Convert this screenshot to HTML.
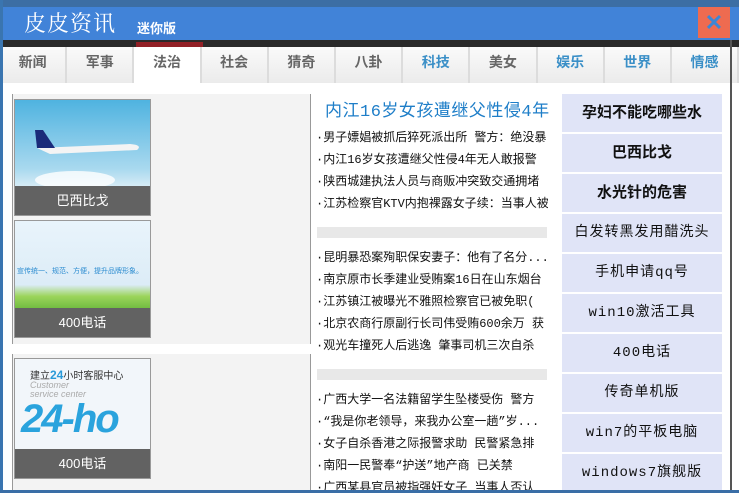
<!DOCTYPE html>
<html><head><meta charset="utf-8"><style>
*{margin:0;padding:0;box-sizing:border-box}
body{width:739px;height:493px;overflow:hidden;background:#fff;font-family:"Liberation Sans","Noto Sans CJK SC",sans-serif;position:relative}
.abs{position:absolute}
#top{left:0;top:0;width:739px;height:7px;background:#3c6ea4}
#hd{left:0;top:7px;width:739px;height:33px;background:#4183d8}
#logo{left:24px;top:7px;color:#fff;font-size:22px;font-family:"Noto Serif CJK SC",serif;letter-spacing:1px}
#mini{left:137px;top:18px;color:#fff;font-size:13px;font-weight:bold}
#close{left:698px;top:7px;width:32px;height:31px;background:#ee6b50;color:#3d86d4;font-size:22px;font-weight:bold;text-align:center;line-height:31px}
#bar{left:0;top:40px;width:739px;height:7px;background:#2a2a2a}
#red{left:136px;top:42px;width:67px;height:5px;background:#922026}
#tabs{left:0;top:47px;width:739px;height:36px;display:flex}
.t{width:67.2px;height:36px;background:linear-gradient(#fafafa,#ebebeb);border-right:2px solid #dcdcdc;text-align:center;line-height:31px;font-size:14px;font-weight:bold;color:#666}
.t.b{color:#3a8fc7}.t.a{background:#fff}
#lb{left:0;top:0;width:3px;height:493px;background:#3a75b0}
#rb{left:730px;top:40px;width:2px;height:453px;background:#555}
#bb{left:0;top:490px;width:739px;height:3px;background:#3a6ea6}
.lp{left:12px;width:299px;background:#f3f3f3;border-left:1px solid #999;border-right:1px solid #999}
.img{left:14px;width:137px;border:1px solid #999;overflow:hidden}
.cap{position:absolute;left:0;bottom:0;width:100%;height:29px;background:#626262;color:#fff;font-size:13px;text-align:center;line-height:29px}
.mid{left:316px;font-size:12px;color:#111;line-height:22px;font-family:"Liberation Mono","Noto Sans CJK SC",monospace;white-space:nowrap;width:232px;overflow:hidden}
.gb{left:317px;width:230px;height:11px;background:#e8e8e8}
.rb{left:562px;width:160px;height:38px;background:#e0e4f7;text-align:center;line-height:38px;font-size:14px;color:#111;font-family:"Liberation Mono","Noto Sans CJK SC",monospace;white-space:nowrap;overflow:hidden;letter-spacing:1px}
.rb.bo{font-weight:bold;font-family:"Liberation Sans","Noto Sans CJK SC",sans-serif;font-size:15px;letter-spacing:0}
</style></head><body>
<div class="abs" id="top"></div>
<div class="abs" id="hd"></div>
<div class="abs" id="logo">皮皮资讯</div>
<div class="abs" id="mini">迷你版</div>
<div class="abs" id="close">✕</div>
<div class="abs" id="bar"></div>
<div class="abs" id="red"></div>
<div class="abs" id="tabs">
<div class="t">新闻</div><div class="t">军事</div><div class="t a">法治</div><div class="t">社会</div><div class="t">猜奇</div><div class="t">八卦</div><div class="t b">科技</div><div class="t">美女</div><div class="t b">娱乐</div><div class="t b">世界</div><div class="t b">情感</div>
</div>
<div class="abs lp" style="top:94px;height:250px"></div>
<div class="abs lp" style="top:354px;height:139px"></div>
<div class="abs img" style="top:99px;height:117px;background:linear-gradient(#4fb3e0,#a9d9ef 60%,#e6f2f8 80%,#7fa7c0)">
<svg width="137" height="88" style="position:absolute;left:0;top:0"><path d="M22 48 L115 44 Q128 45 122 50 L35 54 Z" fill="#f4f4f4"/><path d="M22 48 L20 30 L28 30 L40 48Z" fill="#1a2b7a"/><ellipse cx="60" cy="80" rx="40" ry="9" fill="#fff" opacity=".8"/></svg>
<div class="cap">巴西比戈</div></div>
<div class="abs img" style="top:220px;height:118px;background:linear-gradient(#e9f4fb,#dcecf7 55%,#9bd45a 65%,#4aa52a 85%)">
<div style="position:absolute;left:2px;top:45px;font-size:7px;color:#2a8bd0">宣传统一、规范、方便，提升品牌形象。</div>
<div class="cap">400电话</div></div>
<div class="abs img" style="top:358px;height:121px;background:#f2f6fa">
<div style="position:absolute;left:15px;top:8px;font-size:10px;color:#333">建立<b style="color:#2a9ad8;font-size:12px">24</b>小时客服中心</div>
<div style="position:absolute;left:15px;top:22px;font-size:9px;color:#aaa;line-height:9px;font-style:italic">Customer<br>service center</div>
<div style="position:absolute;left:6px;top:38px;font-size:40px;font-weight:bold;font-style:italic;color:#2aa3dd;letter-spacing:-2px">24-ho</div>
<div class="cap">400电话</div></div>
<div class="abs" style="left:325px;top:96px;color:#1e7ec8;font-size:17px;white-space:nowrap;letter-spacing:0.5px;font-family:'Liberation Mono','Noto Sans CJK SC',monospace">内江16岁女孩遭继父性侵4年</div>
<div class="abs mid" style="top:127px">·男子嫖娼被抓后猝死派出所 警方：绝没暴<br>·内江16岁女孩遭继父性侵4年无人敢报警<br>·陕西城建执法人员与商贩冲突致交通拥堵<br>·江苏检察官KTV内抱裸露女子续：当事人被</div>
<div class="abs gb" style="top:227px"></div>
<div class="abs mid" style="top:247px">·昆明暴恐案殉职保安妻子：他有了名分...<br>·南京原市长季建业受贿案16日在山东烟台<br>·江苏镇江被曝光不雅照检察官已被免职(<br>·北京农商行原副行长司伟受贿600余万 获<br>·观光车撞死人后逃逸 肇事司机三次自杀</div>
<div class="abs gb" style="top:369px"></div>
<div class="abs mid" style="top:389px">·广西大学一名法籍留学生坠楼受伤 警方<br>·“我是你老领导，来我办公室一趟”岁...<br>·女子自杀香港之际报警求助 民警紧急排<br>·南阳一民警奉“护送”地产商 已关禁<br>·广西某县官员被指强奸女子 当事人否认</div>
<div class="abs rb bo" style="top:94px">孕妇不能吃哪些水</div>
<div class="abs rb bo" style="top:134px">巴西比戈</div>
<div class="abs rb bo" style="top:174px">水光针的危害</div>
<div class="abs rb" style="top:214px">白发转黑发用醋洗头</div>
<div class="abs rb" style="top:254px">手机申请qq号</div>
<div class="abs rb" style="top:294px">win10激活工具</div>
<div class="abs rb" style="top:334px">400电话</div>
<div class="abs rb" style="top:374px">传奇单机版</div>
<div class="abs rb" style="top:414px">win7的平板电脑</div>
<div class="abs rb" style="top:454px">windows7旗舰版</div>
<div class="abs" id="lb"></div>
<div class="abs" id="rb"></div>
<div class="abs" id="bb"></div>
</body></html>
